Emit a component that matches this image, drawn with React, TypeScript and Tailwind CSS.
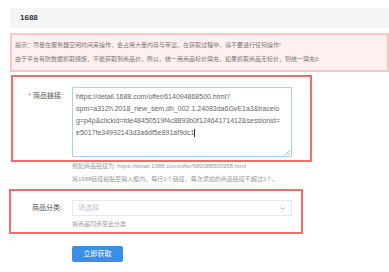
import React from "react";

export default function App() {
  const font = { fontFamily: '"Liberation Sans", Arial, "Noto Sans CJK SC", sans-serif' };
  return (
    <div className="w-[389px] h-[272px] bg-white overflow-hidden pt-[8px] pl-[10px]" style={font}>
      <div className="h-[20px] bg-[#f4f5f7] flex items-center pl-[10px] text-[8px] font-bold text-[#333]">1688</div>
      <div className="mt-[5px] h-[39px] border-2 border-[#ffc4c4] bg-[#fff0f0] pl-[3px] text-[6px] text-[#777] flex flex-col justify-center gap-[7px] leading-[7px]">
        <div>提示：尽量在服务器空闲时间来操作，会占用大量内存与带宽，在获取过程中，请不要进行任何操作!</div>
        <div>由于平台有防数据抓取措施，不能获取到商品价，所以，统一用商品标价填充，如果抓取商品无标价，则统一填充0</div>
      </div>
      <div className="mt-[3px] ml-[1px] w-[301px] h-[87px] border-2 border-[#f46b6b] flex pt-[10px]">
        <div className="w-[50px] text-right text-[7px] text-[#555] pt-[5px] leading-[8px]">
          <span className="text-[#f56c6c] mr-[2px]">*</span>商品链接:
        </div>
        <div className="ml-[9px] w-[220px] h-[70px] border border-[#a8cff5] rounded-[1px] relative px-[3px] pt-[3px] text-[7px] leading-[12px] text-[#666] whitespace-pre">
          <div>https://detail.1688.com/offer/614094868500.html?</div>
          <div>spm=a312h.2018_new_sem.dh_002.1.24083da6GvE1a3&amp;tracelo</div>
          <div>g=p4p&amp;clickid=fde48450519f4c8893b0f12464171412&amp;sessionid=</div>
          <div className="flex items-center">e5017fe34992143d3a6df5e891af9dc1<span className="inline-block w-px h-[8px] bg-[#333]" /></div>
          <svg className="absolute right-[1px] bottom-[1px]" width="5" height="5" viewBox="0 0 5 5">
            <path d="M5 0 L0 5 M5 2.5 L2.5 5" stroke="#aaa" strokeWidth="0.8" />
          </svg>
        </div>
      </div>
      <div className="ml-[62px] text-[6px] text-[#999] leading-[7px] mt-[1px]">例如商品链接为: https://detail.1688.com/offer/580088505958.html</div>
      <div className="ml-[62px] text-[6px] text-[#999] leading-[7px] mt-[6px]">将1688链接粘贴至输入框内，每行1个链接，每次添加的商品链接不超过3个。</div>
      <div className="mt-[6px] ml-[-1px] w-[294px] h-[45px] border-2 border-[#f46b6b] pt-[9px]">
        <div className="flex items-center">
          <div className="w-[51px] text-right text-[7px] text-[#555]">商品分类:</div>
          <div className="ml-[10px] w-[220px] h-[16px] border border-[#e8e8e8] flex items-center justify-between pl-[5px] pr-[6px] text-[7px] text-[#c0c4cc]">
            <span>请选择</span>
            <svg width="5" height="3" viewBox="0 0 5 3">
              <path d="M0.5 0.5 L2.5 2.5 L4.5 0.5" stroke="#999" strokeWidth="0.8" fill="none" />
            </svg>
          </div>
        </div>
        <div className="ml-[61px] mt-[5px] text-[6px] text-[#999] leading-[7px]">将商品同步至此分类</div>
      </div>
      <div className="mt-[12px] ml-[62px] w-[51px] h-[16px] bg-[#3a8ee6] rounded-[2px] flex items-center justify-center text-white text-[7px]">立即获取</div>
    </div>
  );
}
